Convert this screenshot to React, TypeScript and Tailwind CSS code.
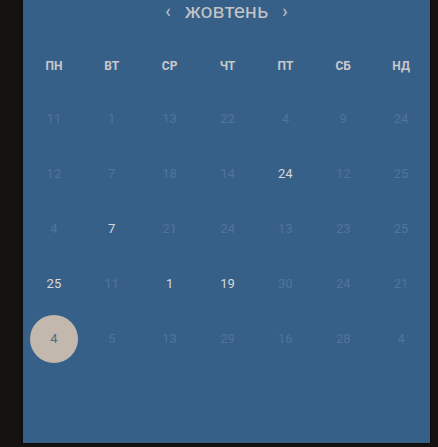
import React from "react";

const weekdays = ["ПН", "ВТ", "СР", "ЧТ", "ПТ", "СБ", "НД"];
type Cell = { n: number; b?: boolean; sel?: boolean };
const rows: Cell[][] = [
  [{ n: 11 }, { n: 1 }, { n: 13 }, { n: 22 }, { n: 4 }, { n: 9 }, { n: 24 }],
  [{ n: 12 }, { n: 7 }, { n: 18 }, { n: 14 }, { n: 24, b: true }, { n: 12 }, { n: 25 }],
  [{ n: 4 }, { n: 7, b: true }, { n: 21 }, { n: 24 }, { n: 13 }, { n: 23 }, { n: 25 }],
  [{ n: 25, b: true }, { n: 11 }, { n: 1, b: true }, { n: 19, b: true }, { n: 30 }, { n: 24 }, { n: 21 }],
  [{ n: 4, sel: true }, { n: 5 }, { n: 13 }, { n: 29 }, { n: 16 }, { n: 28 }, { n: 4 }],
];

export default function App() {
  return (
    <div
      className="flex h-[447px] w-[438px] bg-[#141311]"
      style={{ fontFamily: "Roboto, 'Liberation Sans', sans-serif" }}
    >
      <div className="ml-[23px] flex h-[443px] w-[407px] flex-col bg-[#376089] shadow-[0_0_3px_rgba(0,0,0,0.6)]">
        <div className="flex h-[22px] items-center justify-center gap-[14px] text-[#c4c4c4]">
          <span className="text-[18px] leading-none">‹</span>
          <span className="text-[21px] leading-none">жовтень</span>
          <span className="text-[18px] leading-none">›</span>
        </div>
        <div className="mt-[34px] grid h-[20px] grid-cols-7 items-center pl-[2px]">
          {weekdays.map((w) => (
            <div key={w} className="text-center text-[12px] font-bold text-[#c7c9cc]">
              {w}
            </div>
          ))}
        </div>
        <div className="mt-[15px] flex flex-col pl-[2px]">
          {rows.map((r, i) => (
            <div key={i} className="grid h-[55px] grid-cols-7 items-center">
              {r.map((c, j) => (
                <div key={j} className="flex items-center justify-center">
                  {c.sel ? (
                    <div className="flex h-[48px] w-[48px] items-center justify-center rounded-full bg-[#c3b8ad] text-[13px] text-[#4a6a8c]">
                      {c.n}
                    </div>
                  ) : (
                    <span
                      className={
                        c.b
                          ? "text-[13px] text-[#d6d8da]"
                          : "text-[13px] text-[#52739a]"
                      }
                    >
                      {c.n}
                    </span>
                  )}
                </div>
              ))}
            </div>
          ))}
        </div>
      </div>
    </div>
  );
}
